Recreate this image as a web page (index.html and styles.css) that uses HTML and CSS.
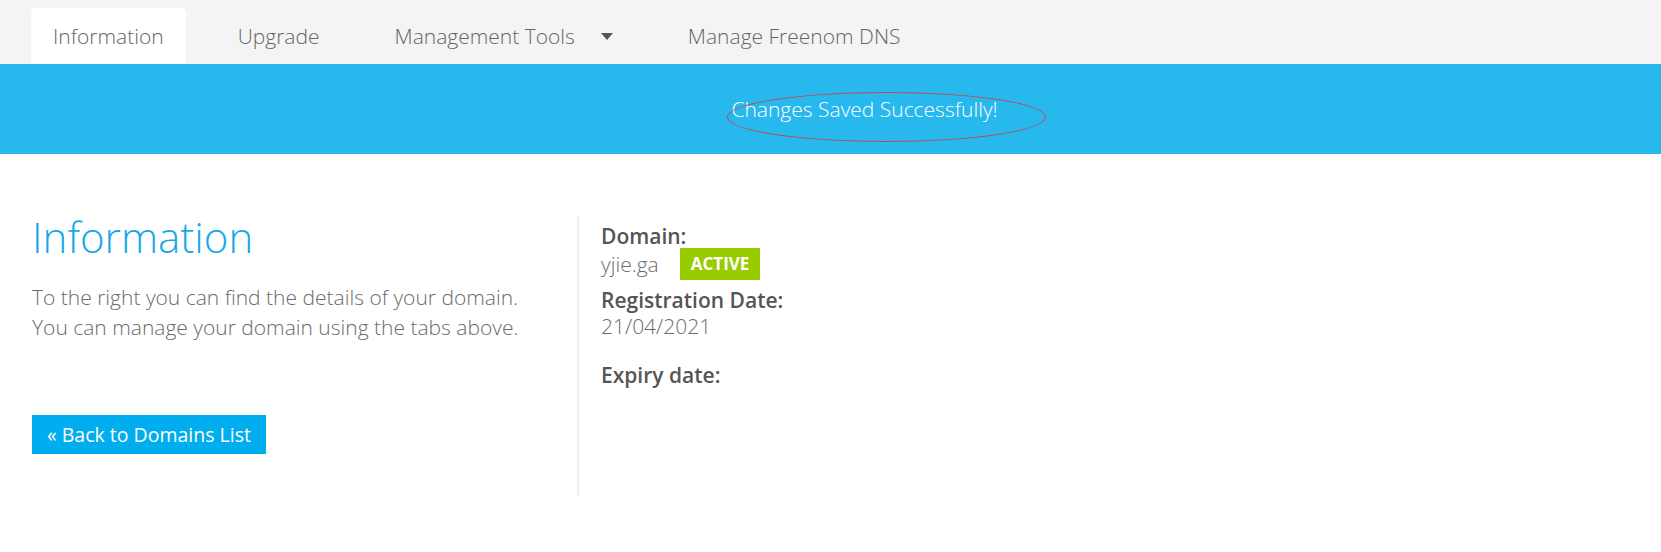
FILE: index.html
```html
<!DOCTYPE html>
<html lang="en">
<head>
<meta charset="utf-8">
<title>Information</title>
<link rel="stylesheet" href="styles.css">
</head>
<body>
<nav class="tabs">
  <a class="tab active">Information</a>
  <a class="tab">Upgrade</a>
  <a class="tab">Management Tools <span class="caret"></span></a>
  <a class="tab">Manage Freenom DNS</a>
</nav>
<div class="banner">
  <span class="banner-text">Changes Saved Successfully!</span>
  <span class="mark"></span>
</div>
<main class="content">
  <section class="left">
    <h1 class="title">Information</h1>
    <p class="intro">To the right you can find the details of your domain.<br>You can manage your domain using the tabs above.</p>
    <a class="btn">« Back to Domains List</a>
  </section>
  <section class="right">
    <div class="label">Domain:</div>
    <div class="value domain-row">yjie.ga <span class="badge">ACTIVE</span></div>
    <div class="label reg">Registration Date:</div>
    <div class="value date">21/04/2021</div>
    <div class="label expiry">Expiry date:</div>
  </section>
</main>
</body>
</html>
```
FILE: styles.css
```css
* { box-sizing: border-box; }
body {
  margin: 0;
  font-family: "Open Sans", "Liberation Sans", sans-serif;
  background: #fff;
  color: #666;
}
.tabs {
  display: flex;
  background: #f4f4f4;
  height: 64px;
  padding: 8px 0 0 31px;
}
.tab {
  display: flex;
  align-items: center;
  height: 56px;
  padding: 0 22px;
  margin-right: 31px;
  font-size: 21px;
  font-weight: 300;
  color: #666;
  border-radius: 5px 5px 0 0;
}
.tab.active { background: #fff; margin-right: 30px; }
.caret {
  display: inline-block;
  width: 0;
  height: 0;
  margin-left: 26px;
  border-left: 6px solid transparent;
  border-right: 6px solid transparent;
  border-top: 7px solid #555;
}
.banner {
  position: relative;
  height: 90px;
  background: #27b8ee;
  display: flex;
  align-items: center;
  justify-content: center;
  padding-left: 68px;
}
.banner-text {
  color: #fff;
  font-size: 21px;
  font-weight: 300;
  margin-top: -1px;
}
.mark {
  position: absolute;
  left: 727px;
  top: 28px;
  width: 319px;
  height: 50px;
  border: 1px solid rgba(225, 50, 50, 0.85);
  border-radius: 50%;
}
.content {
  display: flex;
  padding: 61px 0 0 32px;
}
.left {
  width: 545px;
  min-height: 282px;
}
.title {
  margin: 0;
  font-size: 42px;
  line-height: 44px;
  font-weight: 300;
  color: #17a8ea;
}
.intro {
  margin: 23px 0 0;
  font-size: 21px;
  line-height: 30px;
  font-weight: 300;
  color: #6b6b6b;
}
.btn {
  display: inline-block;
  margin-top: 73px;
  height: 39px;
  padding: 0 15px;
  background: #00adef;
  color: #fff;
  font-size: 19.5px;
  line-height: 39px;
  font-weight: 400;
}
.right {
  border-left: 2px solid #efefef;
  min-height: 282px;
  padding: 7px 0 0 22px;
}
.label {
  font-size: 21px;
  line-height: 28px;
  font-weight: 600;
  color: #555;
}
.value {
  font-size: 21px;
  line-height: 28px;
  font-weight: 300;
  color: #6b6b6b;
}
.domain-row {
  display: flex;
  align-items: center;
  height: 32px;
  margin-top: -2px;
}
.badge {
  display: inline-block;
  margin-left: 21px;
  height: 32px;
  padding: 0 11px;
  background: #99cc00;
  color: #fff;
  font-size: 17px;
  line-height: 32px;
  font-weight: 700;
}
.label.reg { margin-top: 7px; line-height: 26px; }
.value.date { line-height: 26px; }
.label.expiry { margin-top: 22px; }
```
